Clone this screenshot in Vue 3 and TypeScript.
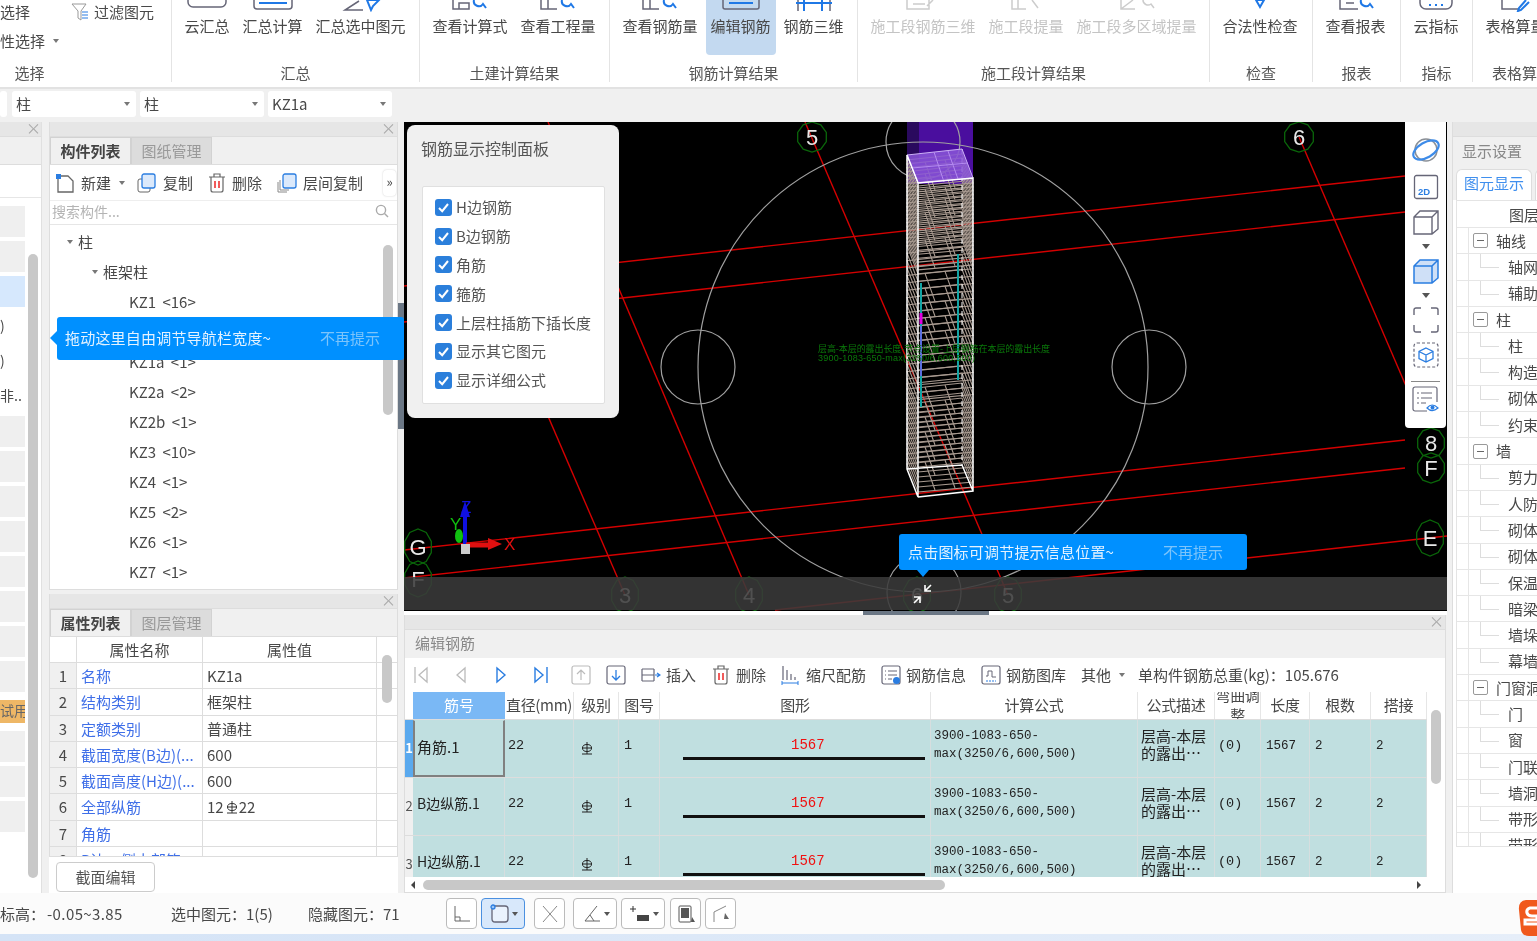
<script setup lang="ts">
interface RibbonItem { label: string; d?: string; b?: string; active?: boolean; off?: boolean }

const ribbon: { label: string; w: number; items: RibbonItem[] }[] = [
  { label: '汇总', w: 248, items: [
    { label: '云汇总', d: 'M1 0v2a5 5 0 0 0 5 5h28a5 5 0 0 0 5-5V0' },
    { label: '汇总计算', d: 'M1 0v6a3 3 0 0 0 3 3h32a3 3 0 0 0 3-3V0', b: 'M6 3h28' },
    { label: '汇总选中图元', d: 'M18 1 4 10h18', b: 'M26 0h12l-6 6-2 4z' },
  ] },
  { label: '土建计算结果', w: 190, items: [
    { label: '查看计算式', d: 'M3 0v9h16V3H9v6', b: 'M24 0a5 5 0 0 0 9 4l3 4' },
    { label: '查看工程量', d: 'M3 0v9h16M10 0v9', b: 'M24 0a5 5 0 0 0 9 4l3 4' },
  ] },
  { label: '钢筋计算结果', w: 248, items: [
    { label: '查看钢筋量', d: 'M3 0v9h16M10 0v9', b: 'M24 0a5 5 0 0 0 9 4l3 4' },
    { label: '编辑钢筋', active: true, d: 'M2 0v7a2 2 0 0 0 2 2h32a2 2 0 0 0 2-2V0', b: 'M8 3h24' },
    { label: '钢筋三维', d: 'M4 0v11M36 0v11', b: 'M2 3h36M10 0v11M28 0v11' },
  ] },
  { label: '施工段计算结果', w: 352, items: [
    { label: '施工段钢筋三维', off: true, d: 'M4 0v9h22V0M30 0l-6 6M10 4h12' },
    { label: '施工段提量', off: true, d: 'M6 0v9h14M12 0v9M26 0l6 8' },
    { label: '施工段多区域提量', off: true, d: 'M4 0v9h14M4 9 16 0M26 0a5 5 0 0 0 8 4l3 4' },
  ] },
  { label: '检查', w: 103, items: [{ label: '合法性检查', b: 'M16 0h8l-4 7z' }] },
  { label: '报表', w: 88, items: [{ label: '查看报表', d: 'M4 0v9h18M10 3h8', b: 'M25 0a5 5 0 0 0 9 4l3 4' }] },
  { label: '指标', w: 72, items: [{ label: '云指标', d: 'M4 0v3a6 6 0 0 0 6 6h20a6 6 0 0 0 6-6V0', b: 'M13 5h2M19 5h2M25 5h2' }] },
  { label: '表格算量', w: 98, items: [{ label: '表格算量', d: 'M6 0v9h16', b: 'M30 0l-7 8-1 3 3-1 8-8' }] },
]

const navCells = [
  '', '', 'blue', ')', ')', '非..', '', '', '', '', '', '', '', '', '试用', '', '', '',
]

// the second row sits fully behind the tooltip
const treeRows = ['KZ1 <16>', '', 'KZ1a <1>', 'KZ2a <2>', 'KZ2b <1>', 'KZ3 <10>', 'KZ4 <1>', 'KZ5 <2>', 'KZ6 <1>', 'KZ7 <1>']

const props_ = [
  { n: '名称', v: 'KZ1a' },
  { n: '结构类别', v: '框架柱' },
  { n: '定额类别', v: '普通柱' },
  { n: '截面宽度(B边)(...', v: '600' },
  { n: '截面高度(H边)(...', v: '600' },
  { n: '全部纵筋', v: '22', bar: true },
  { n: '角筋', v: '' },
  { n: 'B边一侧中部筋', v: '' },
]

const checks = ['H边钢筋', 'B边钢筋', '角筋', '箍筋', '上层柱插筋下插长度', '显示其它图元', '显示详细公式']

const layers = [
  { t: '轴线', p: true }, { t: '轴网' }, { t: '辅助' },
  { t: '柱', p: true }, { t: '柱' }, { t: '构造' }, { t: '砌体' }, { t: '约束' },
  { t: '墙', p: true }, { t: '剪力' }, { t: '人防' }, { t: '砌体' }, { t: '砌体' }, { t: '保温' }, { t: '暗梁' }, { t: '墙垛' }, { t: '幕墙' },
  { t: '门窗洞', p: true }, { t: '门' }, { t: '窗' }, { t: '门联' }, { t: '墙洞' }, { t: '带形' }, { t: '带形' },
]

const rebars = [
  { no: 1, name: '角筋.1' },
  { no: 2, name: 'B边纵筋.1' },
  { no: 3, name: 'H边纵筋.1' },
]

const heads = ['直径(mm)', '级别', '图号', '图形', '计算公式', '公式描述', '弯曲调整', '长度', '根数', '搭接']

// stirrup spacing is tighter near the top of the column, as in the model view
const stirrups: string[] = []
let sy = 188
while (sy < 492) {
  const y = sy
  stirrups.push(`M918 ${y}L973 ${y - 5}L962 ${y - 34}L907 ${y - 28}Z`)
  if (Math.round(y) % 3 === 0) stirrups.push(`M935 ${y - 2}L925 ${y - 30}M955 ${y - 4}L945 ${y - 32}`)
  sy += y < 270 ? 3.9 : y < 400 ? 7.4 : 5
}

const bubbles = [
  { x: 812, y: 137, rx: 15, ry: 15, t: '5' },
  { x: 1299, y: 137, rx: 15, ry: 15, t: '6' },
  { x: 418, y: 547, rx: 14, ry: 18, t: 'G' },
  { x: 418, y: 579, rx: 14, ry: 18, t: 'F' },
  { x: 1430, y: 538, rx: 14, ry: 18, t: 'E' },
  { x: 1431, y: 443, rx: 14, ry: 15, t: '8' },
  { x: 1431, y: 468, rx: 14, ry: 15, t: 'F' },
  { x: 625, y: 595, rx: 14, ry: 18, t: '3' },
  { x: 749, y: 595, rx: 14, ry: 18, t: '4' },
  { x: 917, y: 595, rx: 14, ry: 18, t: '6' },
  { x: 1008, y: 595, rx: 14, ry: 18, t: '5' },
]

function bubblePoints(b: { x: number; y: number; rx: number; ry: number }) {
  const pts: string[] = []
  for (let i = 0; i < 10; i++) {
    const a = (i / 10) * Math.PI * 2 + Math.PI / 10
    pts.push(`${(b.x + Math.cos(a) * b.rx).toFixed(1)},${(b.y + Math.sin(a) * b.ry).toFixed(1)}`)
  }
  return pts.join(' ')
}

const redLines = [
  [404, 286, 1405, 176], [404, 322, 1405, 212], [404, 550, 1405, 440], [404, 578, 1405, 468], [775, 610, 1447, 536],
  [805, 122, 1008, 595], [548, 122, 749, 595], [470, 235, 625, 595], [1299, 137, 1412, 400],
]
</script>

<template>
  <div class="app">
    <header class="ribbon">
      <section class="group first">
        <div class="sel-rows">
          <div class="sel-row">
            <span class="sel-a">选择</span>
            <svg width="18" height="20" viewBox="0 0 18 20" class="funnel">
              <path d="M1 2h14L10 9v9l-3-2V9z" fill="none" stroke="#999" />
              <path d="M11 10h6M11 13h6M11 16h6" stroke="#2a7de1" />
            </svg>
            <span>过滤图元</span>
          </div>
          <div class="sel-row"><span>性选择</span><i class="caret small-gap"></i></div>
        </div>
        <div class="group-label">选择</div>
      </section>
      <section v-for="g in ribbon" :key="g.label" class="group" :style="{ width: g.w + 'px' }">
        <div class="items">
          <div
            v-for="it in g.items"
            :key="it.label"
            class="rb-item"
            :class="{ active: it.active, off: it.off }"
          >
            <svg width="40" height="12" viewBox="0 0 40 12" fill="none">
              <path v-if="it.d" :d="it.d" :stroke="it.off ? '#ccc' : '#667'" stroke-width="1.5" />
              <path v-if="it.b" :d="it.b" stroke="#1f78e6" stroke-width="2" />
            </svg>
            <span>{{ it.label }}</span>
          </div>
        </div>
        <div class="group-label">{{ g.label }}</div>
      </section>
    </header>

    <div class="combos">
      <div class="combo stub"><i class="caret"></i></div>
      <div class="combo"><span>柱</span><i class="caret"></i></div>
      <div class="combo"><span>柱</span><i class="caret"></i></div>
      <div class="combo"><span>KZ1a</span><i class="caret"></i></div>
    </div>

    <main class="main">
      <aside class="nav">
        <div class="bar"><span class="close">×</span></div>
        <div class="nav-body">
          <div class="nav-tab"></div>
          <div class="nav-tool"></div>
          <div class="nav-cells">
            <div
              v-for="(c, i) in navCells"
              :key="i"
              class="nav-cell"
              :class="{ blue: c === 'blue', trial: c === '试用', text: c && c !== 'blue' }"
            >{{ c === 'blue' ? '' : c }}</div>
          </div>
          <div class="nav-scroll"></div>
        </div>
      </aside>

      <div class="col2">
        <section class="list-panel">
          <div class="bar"><span class="close">×</span></div>
          <div class="tabs">
            <span class="tab on">构件列表</span>
            <span class="tab">图纸管理</span>
          </div>
          <div class="list-tools">
            <span class="tool first-tool">
              <svg width="20" height="20" viewBox="0 0 20 20" fill="none">
                <path d="M3 3h10l5 5v11H3z" stroke="#666" stroke-width="1.3" />
                <rect x="1" y="1" width="5" height="5" fill="#2a7de1" />
              </svg>
              新建<i class="caret tool-caret"></i>
            </span>
            <span class="tool">
              <svg width="20" height="20" viewBox="0 0 20 20" fill="none">
                <rect x="1" y="6" width="12" height="13" rx="2" stroke="#666" />
                <rect x="5" y="1" width="13" height="14" rx="2" fill="#dbe9fb" stroke="#2a7de1" stroke-width="1.3" />
              </svg>
              复制
            </span>
            <span class="tool">
              <svg width="18" height="20" viewBox="0 0 18 20" fill="none">
                <path d="M1 4h16M6 4V1h6v3M3 4v13a2 2 0 0 0 2 2h8a2 2 0 0 0 2-2V4" stroke="#666" stroke-width="1.2" />
                <path d="M7 8v7M11 8v7" stroke="#e33" stroke-width="1.6" />
              </svg>
              删除
            </span>
            <span class="tool">
              <svg width="20" height="20" viewBox="0 0 20 20" fill="none">
                <path d="M1 9v10h9M3 7v10h9" stroke="#888" />
                <rect x="6" y="1" width="13" height="14" rx="2" fill="#dbe9fb" stroke="#2a7de1" stroke-width="1.3" />
              </svg>
              层间复制
            </span>
            <span class="more">»</span>
          </div>
          <div class="search">
            <span>搜索构件...</span>
            <svg width="14" height="14" viewBox="0 0 14 14" fill="none">
              <circle cx="6" cy="6" r="4.6" stroke="#aaa" stroke-width="1.4" /><path d="m9.5 9.5 3.5 3.5" stroke="#aaa" stroke-width="1.4" />
            </svg>
          </div>
          <div class="tree">
            <div class="t-row lv0"><i class="caret tree-caret"></i>柱</div>
            <div class="t-row lv1"><i class="caret tree-caret"></i>框架柱</div>
            <div v-for="(r, i) in treeRows" :key="i" class="t-row lv2">{{ r }}</div>
            <div class="tree-scroll"></div>
          </div>
          <div class="tip nav-tip">
            <span class="tip-msg">拖动这里自由调节导航栏宽度~</span><span class="tip-off">不再提示</span>
          </div>
        </section>

        <section class="prop-panel">
          <div class="bar"><span class="close">×</span></div>
          <div class="tabs">
            <span class="tab on">属性列表</span>
            <span class="tab">图层管理</span>
          </div>
          <div class="prop-table">
            <div class="p-row p-head">
              <div class="p-i"></div>
              <div class="p-n center">属性名称</div>
              <div class="p-v center">属性值</div>
            </div>
            <div v-for="(p, i) in props_" :key="p.n" class="p-row">
              <div class="p-i">{{ i + 1 }}</div>
              <div class="p-n link">{{ p.n }}</div>
              <div class="p-v">
                <template v-if="p.bar">12<svg class="grade" width="12" height="13" viewBox="0 0 12 13" fill="none" stroke="#333"><ellipse cx="6" cy="6" rx="4.5" ry="3.5" /><path d="M6 0v12M1 12h10M1 6h10" /></svg></template>{{ p.v }}
              </div>
            </div>
            <div class="prop-scroll"></div>
          </div>
        </section>
        <div class="sec-row"><button class="sec-btn" type="button">截面编辑</button></div>
      </div>

      <div class="v-handle"><i></i></div>

      <div class="col3">
        <section class="viewport">
          <svg class="scene" width="1043" height="489" viewBox="404 122 1043 489" fill="none">
            <rect x="907" y="122" width="66" height="62" fill="#4a0e9e" />
            <rect x="907" y="122" width="12" height="40" fill="#2a0a5e" />
            <line v-for="(l, i) in redLines" :key="i" :x1="l[0]" :y1="l[1]" :x2="l[2]" :y2="l[3]" stroke="#d40000" stroke-width="1.4" />
            <g stroke="#a0a0a0" stroke-width="1.2">
              <circle cx="923" cy="367" r="225" />
              <circle cx="698" cy="367" r="37" />
              <circle cx="1149" cy="367" r="37" />
              <circle cx="923" cy="142" r="37" />
              <circle cx="924" cy="592" r="37" />
            </g>
            <path v-for="(s, i) in stirrups" :key="i" :d="s" stroke="#a89a90" stroke-width="1.1" />
            <path d="M921 283v124M958 254v126" stroke="#12a5a5" stroke-width="2" />
            <path d="M921 313v11" stroke="#e000e0" stroke-width="3" />
            <path d="M921 326v50" stroke="#5a6ee0" stroke-width="2" />
            <path d="M962 149v316" stroke="#fff" stroke-dasharray="5 4" />
            <path d="M907 155 962 149 973 178 918 183z" fill="#8a55d8" fill-opacity=".85" stroke="#cbb0f5" />
            <path d="M912 168 968 163M934 152l10 30M948 151l10 28" stroke="#b48af0" />
            <path d="M907 155v314l11 28V183zM918 183l55-5v313l-55 6M907 469l55-4 11 26" stroke="#fff" stroke-width="1.5" />
            <text x="818" y="352" fill="#0a7a0a" font-size="9" textLength="232" class="scene-cn">层高-本层的露出长度-节点设置-上层钢筋在本层的露出长度</text>
            <text x="818" y="361" fill="#0a7a0a" font-size="9" textLength="157" class="scene-en">3900-1083-650-max(3250/6,600,500)</text>
            <g v-for="b in bubbles" :key="b.x + b.t">
              <polygon :points="bubblePoints(b)" stroke="#0a660a" stroke-width="1.3" />
              <text :x="b.x" :y="b.y + 8" text-anchor="middle" fill="#e8e8e8" font-size="22" class="scene-en">{{ b.t }}</text>
            </g>
            <path d="M465 545v-32" stroke="#1010e0" stroke-width="4" />
            <path d="M465 501l-5 16h10z" fill="#1010e0" />
            <text x="461" y="513" fill="#1010e0" font-size="17" class="scene-en">Z</text>
            <text x="450" y="530" fill="#10c010" font-size="17" class="scene-en">Y</text>
            <ellipse cx="459" cy="536" rx="4" ry="7" fill="#10c010" />
            <path d="M466 545h24" stroke="#e01010" stroke-width="5" />
            <path d="M502 544l-14-6v12z" fill="#e01010" />
            <text x="504" y="550" fill="#e01010" font-size="17" class="scene-en">X</text>
            <rect x="461" y="544" width="9" height="10" fill="#ccc" />
            <rect x="404" y="577" width="1043" height="33" fill="#3a3a3a" fill-opacity=".88" />
            <path d="M925 591l6-6M925 585v6h6M920 597l-6 6M920 603v-6h-6" stroke="#fff" stroke-width="1.6" />
          </svg>

          <div class="rebar-panel">
            <div class="rp-title">钢筋显示控制面板</div>
            <div class="rp-box">
              <label v-for="c in checks" :key="c" class="rp-row">
                <span class="check">
                  <svg width="13" height="13" viewBox="0 0 13 13" fill="none"><path d="m2 7 3.2 3.2L11 3" stroke="#fff" stroke-width="2" /></svg>
                </span>
                {{ c }}
              </label>
            </div>
          </div>

          <div class="palette">
            <svg width="30" height="30" viewBox="0 0 30 30" fill="none">
              <circle cx="15" cy="15" r="11" stroke="#8a8f96" stroke-width="1.5" />
              <ellipse cx="15" cy="15" rx="14" ry="7.5" transform="rotate(-30 15 15)" stroke="#3d8be8" stroke-width="2.2" />
            </svg>
            <svg width="26" height="26" viewBox="0 0 26 26" fill="none">
              <rect x="1.500" y="1.500" width="23" height="23" rx="2" stroke="#667" stroke-width="1.3" />
              <text x="5" y="21" fill="#2a7de1" font-size="9.500" font-weight="700" class="scene-en">2D</text>
            </svg>
            <div class="cube-pair">
              <svg width="26" height="26" viewBox="0 0 26 26" fill="none">
                <path d="M1 8 7 2h18v18l-6 5H1zM1 8h18v17M19 8l6-6" stroke="#667" stroke-width="1.4" />
              </svg>
              <i class="caret dark"></i>
            </div>
            <div class="cube-pair">
              <svg width="26" height="26" viewBox="0 0 26 26" fill="#cfe0f7">
                <path d="M1 8 7 2h18v18l-6 5H1zM1 8h18v17M19 8l6-6" stroke="#2a7de1" stroke-width="1.5" />
              </svg>
              <i class="caret dark"></i>
            </div>
            <svg width="26" height="26" viewBox="0 0 26 26" fill="none">
              <path d="M1 8V3a2 2 0 0 1 2-2h5M18 1h5a2 2 0 0 1 2 2v5M25 18v5a2 2 0 0 1-2 2h-5M8 25H3a2 2 0 0 1-2-2v-5" stroke="#667" stroke-width="1.4" />
            </svg>
            <svg width="26" height="26" viewBox="0 0 26 26" fill="none">
              <rect x="1" y="1" width="24" height="24" rx="3" stroke="#667" stroke-width="1.2" stroke-dasharray="3 2" />
              <path d="m13 6 7 3.500v7L13 20l-7-3.500v-7zM6 9.500l7 3.500 7-3.500M13 13v7" stroke="#2a7de1" stroke-width="1.3" />
            </svg>
            <div class="pal-sep"></div>
            <svg width="28" height="28" viewBox="0 0 28 28" fill="none">
              <path d="M15 25H3a2 2 0 0 1-2-2V3a2 2 0 0 1 2-2h20a2 2 0 0 1 2 2v13" stroke="#667" stroke-width="1.2" />
              <path d="M5 7h2M9 7h11M5 12h2M9 12h11M5 17h2M9 17h5" stroke="#667" stroke-width="1.2" />
              <path d="M15 22q5-6 11 0-6 5-11 0z" stroke="#2a7de1" stroke-width="1.2" /><circle cx="20.500" cy="21.500" r="2" fill="#2a7de1" />
            </svg>
          </div>
          <div class="pal-handle"></div>

          <div class="tip view-tip">
            <span class="tip-msg">点击图标可调节提示信息位置~</span><span class="tip-off">不再提示</span>
          </div>
        </section>

        <div class="h-strip"><div class="h-handle"></div></div>

        <section class="edit-panel">
          <div class="bar"><span class="close">×</span></div>
          <div class="edit-title">编辑钢筋</div>
          <div class="edit-tools">
            <svg class="ic" width="14" height="18" viewBox="0 0 14 18" fill="none" stroke="#bbb" stroke-width="1.3"><path d="M1 1v16M13 2 5 9l8 7z" /></svg>
            <svg class="ic" width="14" height="18" viewBox="0 0 14 18" fill="none" stroke="#bbb" stroke-width="1.3"><path d="M11 2 3 9l8 7z" /></svg>
            <svg class="ic" width="14" height="18" viewBox="0 0 14 18" fill="none" stroke="#2a7de1" stroke-width="1.4"><path d="M3 2l8 7-8 7z" /></svg>
            <svg class="ic" width="14" height="18" viewBox="0 0 14 18" fill="none" stroke="#2a7de1" stroke-width="1.4"><path d="M1 2l8 7-8 7zM13 1v16" /></svg>
            <svg class="ic box" width="20" height="20" viewBox="0 0 20 20" fill="none" stroke="#bbb" stroke-width="1.2"><rect x="1" y="1" width="18" height="18" rx="2" /><path d="M10 15V5M6 9l4-4 4 4" /></svg>
            <svg class="ic box2" width="20" height="20" viewBox="0 0 20 20" fill="none"><rect x="1" y="1" width="18" height="18" rx="2" stroke="#667" stroke-width="1.2" /><path d="M10 5v10M6 11l4 4 4-4" stroke="#2a7de1" stroke-width="1.3" /></svg>
            <span class="et ins">
              <svg width="20" height="18" viewBox="0 0 20 18" fill="none"><path d="M1 3h12M1 9h12M1 15h12M1 3v12M13 3v12" stroke="#667" stroke-width="1.2" /><path d="M14 9h4M16 7l3 2-3 2" stroke="#2a7de1" stroke-width="1.2" /></svg>
              插入
            </span>
            <span class="et del">
              <svg width="18" height="20" viewBox="0 0 18 20" fill="none"><path d="M1 4h16M6 4V1h6v3M3 4v13a2 2 0 0 0 2 2h8a2 2 0 0 0 2-2V4" stroke="#666" stroke-width="1.2" /><path d="M7 8v7M11 8v7" stroke="#e33" stroke-width="1.6" /></svg>
              删除
            </span>
            <span class="et scale">
              <svg width="18" height="20" viewBox="0 0 18 20" fill="none"><path d="M2 1v14M6 5v10M10 9v6M14 12v3" stroke="#667" stroke-width="1.2" /><path d="M1 18h16M1 16v4M17 16v4" stroke="#2a7de1" /></svg>
              缩尺配筋
            </span>
            <span class="et info">
              <svg width="20" height="20" viewBox="0 0 20 20" fill="none"><rect x="1" y="1" width="18" height="18" rx="2" stroke="#667" stroke-width="1.2" /><path d="M4 6h1M7 6h9M4 10h1M7 10h9M4 14h1M7 14h4" stroke="#667" /><circle cx="15.500" cy="15.500" r="3.500" fill="#2a7de1" /></svg>
              钢筋信息
            </span>
            <span class="et lib">
              <svg width="20" height="20" viewBox="0 0 20 20" fill="none"><rect x="1" y="1" width="18" height="18" rx="2" stroke="#667" stroke-width="1.2" /><path d="M5 11h2V6h4v6h4" stroke="#667" /><path d="M5 16h10" stroke="#2a7de1" stroke-dasharray="2 1" /></svg>
              钢筋图库
            </span>
            <span class="et other">其他<i class="caret tool-caret"></i></span>
            <span class="et total">单构件钢筋总重(kg)：105.676</span>
          </div>

          <div class="grid-wrap">
            <div class="g-row g-head">
              <div class="c rh"></div>
              <div class="c no-head">筋号</div>
              <div v-for="h in heads" :key="h" class="c head-cell"><span>{{ h }}</span></div>
            </div>
            <div v-for="r in rebars" :key="r.no" class="g-row g-body" :class="{ sel: r.no === 1 }">
              <div class="c rh">{{ r.no }}</div>
              <div class="c name">{{ r.name }}</div>
              <div class="c mono">22</div>
              <div class="c mono lvl">
                <svg width="12" height="13" viewBox="0 0 12 13" fill="none" stroke="#222"><ellipse cx="6" cy="6" rx="4.500" ry="3.500" /><path d="M6 0v12M1 12h10M1 6h10" /></svg>
              </div>
              <div class="c mono fig">1</div>
              <div class="c shape"><span>1567</span><i></i></div>
              <div class="c formula">3900-1083-650-<br />max(3250/6,600,500)</div>
              <div class="c desc">层高-本层<br />的露出…</div>
              <div class="c mono">(0)</div>
              <div class="c mono sm">1567</div>
              <div class="c mono sm">2</div>
              <div class="c mono sm">2</div>
            </div>
            <div class="grid-vscroll"></div>
          </div>
          <div class="hscroll">
            <i class="arr l"></i>
            <div class="thumb"></div>
            <i class="arr r"></i>
          </div>
        </section>
      </div>

      <div class="gap-right"></div>

      <aside class="right">
        <div class="bar"></div>
        <div class="r-title">显示设置</div>
        <div class="r-tabs"><span class="r-tab">图元显示</span><span class="r-tab stub-tab"></span></div>
        <div class="layer-tree">
          <div class="l-head">图层</div>
          <div v-for="(l, i) in layers" :key="i" class="l-row" :class="{ parent: l.p }">
            <span v-if="l.p" class="exp"></span>
            <span v-else class="dash"></span>
            <span class="l-text">{{ l.t }}</span>
          </div>
        </div>
      </aside>
    </main>

    <footer class="status">
      <span class="s-a">标高：</span>
      <span class="s-b">-0.05~3.85</span>
      <span class="s-c">选中图元：1(5)</span>
      <span class="s-d">隐藏图元：71</span>
      <div class="s-tools">
        <span class="st"><svg width="22" height="22" viewBox="0 0 22 22" fill="none" stroke="#666"><path d="M4 3v15h15M4 14h5v4" /></svg></span>
        <span class="st wide on"><svg width="22" height="22" viewBox="0 0 22 22" fill="none" stroke="#667" stroke-width="1.3"><rect x="3" y="3" width="16" height="16" rx="3" fill="#eaf2fd" /><circle cx="4" cy="4" r="2" fill="#9cc4f5" stroke="#2a7de1" /></svg><i class="caret dark tiny"></i></span>
        <span class="st after-on"><svg width="22" height="22" viewBox="0 0 22 22" fill="none" stroke="#888"><path d="M4 3l14 16M18 3 4 19" /></svg></span>
        <span class="st wide after-x"><svg width="22" height="22" viewBox="0 0 22 22" fill="none" stroke="#666"><path d="M16 3 4 18h15M9 12l4 6" /></svg><i class="caret dark tiny"></i></span>
        <span class="st wide"><svg width="24" height="22" viewBox="0 0 24 22" fill="none"><path d="M2 6h6M5 3v6" stroke="#333" /><rect x="9" y="12" width="12" height="6" fill="#444" /></svg><i class="caret dark tiny"></i></span>
        <span class="st after-wide"><svg width="22" height="22" viewBox="0 0 22 22" fill="none"><rect x="4" y="3" width="12" height="16" rx="1" stroke="#555" /><rect x="6" y="5" width="8" height="10" fill="#555" /><path d="M17 14l3 5h-4z" fill="#555" /></svg></span>
        <span class="st"><svg width="22" height="22" viewBox="0 0 22 22" fill="none"><path d="M4 19V9l12-6" stroke="#888" /><path d="M15 10l4 6h-5z" fill="#666" /></svg></span>
      </div>
      <svg class="logo" width="19" height="36" viewBox="0 0 19 36">
        <path d="M19 0H8Q0 1 1 10l2 20q1 6 8 6h8z" fill="#f0591d" />
        <path d="M19 8h-7q-4 1-3 5 1 3 5 3h5v4H7v4h12" fill="none" stroke="#fff" stroke-width="3" />
      </svg>
    </footer>
    <div class="task-strip"></div>
  </div>
</template>

<style scoped>
.app {
  position: relative;
  display: flex;
  flex-direction: column;
  width: 1537px;
  height: 941px;
  overflow: hidden;
  background: #f0f0f0;
  color: #484848;
  font-family: "Noto Sans CJK SC", "Noto Sans", sans-serif;
  font-size: 15px;
  line-height: 18px;
  filter: blur(0.4px);
}

i { display: block; font-style: normal; }

.caret {
  width: 0;
  height: 0;
  border-left: 3.5px solid transparent;
  border-right: 3.5px solid transparent;
  border-top: 4px solid #777;
}
.caret.dark { border-top-color: #555; }
.caret.tiny { border-left-width: 3px; border-right-width: 3px; border-top-width: 4px; }

/* ribbon */
.ribbon {
  display: flex;
  height: 89px;
  flex: none;
  background: #fff;
  border-bottom: 2px solid #e2e2e2;
  box-sizing: border-box;
  overflow: hidden;
}
.group {
  display: flex;
  flex: none;
  flex-direction: column;
  height: 82px;
  box-sizing: border-box;
  border-right: 1px solid #e4e4e4;
}
.group:last-child { border-right: 0; }
.group.first { width: 172px; }
.sel-rows { height: 64px; margin-top: -3px; box-sizing: border-box; padding-bottom: 0; }
.sel-row { display: flex; align-items: center; height: 29px; }
.sel-a { width: 71px; }
.funnel { margin-right: 5px; }
.small-gap { margin-left: 8px; }
.group-label { text-align: center; height: 18px; color: #555; }
.items { display: flex; gap: 13px; height: 55px; margin-bottom: 9px; padding-left: 12.5px; white-space: nowrap; }
.first .group-label { padding-right: 112px; margin-top: 3px; }
.rb-item { display: flex; flex-direction: column; align-items: center; }
.rb-item svg { display: block; margin-bottom: 5px; }
.rb-item.off { color: #c4c4c4; }
.rb-item.active {
  margin: 0 -5px;
  padding: 0 5px;
  background: #c3d9f0;
  border-radius: 0 0 4px 4px;
}

/* selector row */
.combos {
  display: flex;
  flex: none;
  align-items: center;
  gap: 4px;
  height: 33px;
  padding-bottom: 3px;
  box-sizing: border-box;
}
.combo {
  display: flex;
  align-items: center;
  justify-content: space-between;
  width: 124px;
  height: 26px;
  padding: 0 6px 0 4px;
  box-sizing: border-box;
  background: #fff;
  border-radius: 3px;
}
.combo.stub { width: 7px; margin-right: 1px; padding: 0; overflow: hidden; }
.combo.stub .caret { display: none; }

/* shared panel bits */
.main { display: flex; flex: none; height: 771px; }
.bar {
  position: relative;
  height: 14px;
  flex: none;
  background: #e6e6e6;
  border-bottom: 1px solid #ddd;
}
.close {
  position: absolute;
  top: -2px;
  right: 1px;
  color: #aaa;
  font-size: 15px;
  line-height: 15px;
}
.nav .close { right: 0; }
.tabs {
  display: flex;
  height: 28px;
  box-sizing: border-box;
  background: #f0f0f0;
  border-bottom: 1px solid #ddd;
}
.tab {
  width: 81px;
  line-height: 25px;
  text-align: center;
  color: #999;
  background: #dcdcdc;
  border: 1px solid #d2d2d2;
  border-bottom: 0;
  box-sizing: border-box;
}
.tab.on { font-weight: 700; color: #444; background: #f0f0f0; }

/* left nav */
.nav { width: 42px; flex: none; background: #fff; display: flex; flex-direction: column; border-right: 1px solid #e0e0e0; box-sizing: border-box; }
.nav-body { position: relative; flex: 1; }
.nav-tab { height: 28px; box-sizing: border-box; background: #f0f0f0; border-bottom: 1px solid #ddd; }
.nav-tool { height: 33px; box-sizing: border-box; border-bottom: 1px solid #e6e6e6; margin-bottom: 8px; }
.nav-cells { width: 25px; display: flex; flex-direction: column; gap: 4px; overflow: hidden; height: 661px; }
.nav-cell { flex: none; height: 31px; background: #efefef; line-height: 29px; white-space: nowrap; text-align: right; font-size: 14px; }
.nav-cell.text { background: #fff; text-align: left; }
.nav-cell.blue { background: #d6e8fd; }
.nav-cell.trial { height: 23px; margin: 4px 0; line-height: 21px; background: #eeb766; color: #666; text-align: right; }
.nav-scroll {
  position: absolute;
  left: 28px;
  top: 117px;
  width: 10px;
  height: 624px;
  border-radius: 5px;
  background: #c8c8c8;
}

.col2 { width: 349px; flex: none; margin-left: 7px; display: flex; flex-direction: column; }

/* component list */
.list-panel {
  position: relative;
  height: 468px;
  display: flex;
  flex-direction: column;
  background: #fff;
  border: 1px solid #ddd;
  border-top: 0;
  box-sizing: border-box;
}
.list-tools {
  display: flex;
  align-items: center;
  gap: 15px;
  height: 35px;
  padding-left: 5px;
  border-bottom: 1px solid #eee;
}
.tool { display: flex; align-items: center; gap: 6px; white-space: nowrap; }
.tool-caret { margin-left: 1px; border-left-width: 3px; border-right-width: 3px; }
.first-tool { margin-right: -3px; }
.first-tool .tool-caret { margin-left: 2px; }
.more {
  margin-left: 5px;
  width: 13px;
  height: 26px;
  line-height: 24px;
  text-align: center;
  border-radius: 4px;
  box-shadow: 0 0 2px #ccc;
  font-size: 13px;
}
.search {
  display: flex;
  align-items: center;
  justify-content: space-between;
  height: 24px;
  flex: none;
  padding: 0 8px 3px 2px;
  box-sizing: border-box;
  color: #b4b4b4;
  font-size: 14px;
  border-bottom: 1px solid #e6e6e6;
}
.tree { position: relative; flex: 1; padding-top: 2px; overflow: hidden; }
.t-row { display: flex; align-items: center; height: 30px; white-space: pre; flex: none; }
.lv0 { padding-left: 17px; }
.lv1 { padding-left: 42px; }
.lv2 { padding-left: 79px; word-spacing: 3px; }
.tree-caret { margin-right: 5px; }
.tree-scroll {
  position: absolute;
  right: 4px;
  top: 20px;
  width: 10px;
  height: 170px;
  border-radius: 5px;
  background: #c8c8c8;
}
.tip {
  position: absolute;
  display: flex;
  align-items: center;
  justify-content: space-between;
  color: #e4f2ff;
  background: #0090ff;
  border-radius: 3px;
  box-sizing: border-box;
  white-space: nowrap;
  z-index: 3;
}
.tip-msg { letter-spacing: 0.2px; }
.tip-off { color: #7cc4fb; }
.tip::after {
  content: '';
  position: absolute;
  width: 0;
  height: 0;
}
.nav-tip { left: 7px; top: 195px; width: 347px; height: 43px; padding: 0 24px 2px 8px; }
.nav-tip::after {
  left: -7px;
  top: 14px;
  border-top: 7px solid transparent;
  border-bottom: 7px solid transparent;
  border-right: 7px solid #0090ff;
}

/* properties */
.prop-panel {
  margin-top: 4px;
  height: 263px;
  display: flex;
  flex-direction: column;
  background: #f4f4f4;
  border: 1px solid #ddd;
  border-top: 0;
  box-sizing: border-box;
  overflow: hidden;
}
.prop-table { position: relative; flex: 1; background: #fff; overflow: hidden; }
.p-row {
  display: grid;
  grid-template-columns: 27px 126px 174px;
  height: 26.3px;
  line-height: 25px;
  box-sizing: border-box;
  border-bottom: 1px solid #ddd;
}
.p-head { height: 26px; }
.p-i { background: #f0f0f0; text-align: center; border-right: 1px solid #ddd; }
.p-head .p-i { background: #fff; }
.p-n { padding-left: 4px; border-right: 1px solid #ddd; white-space: nowrap; overflow: hidden; }
.p-v { padding-left: 4px; border-right: 1px solid #ddd; }
.center { text-align: center; padding-left: 0; }
.link { color: #3f6fe8; }
.grade { margin: 0 1px -1px 2px; }
.prop-scroll {
  position: absolute;
  right: 5px;
  top: 18px;
  width: 10px;
  height: 48px;
  border-radius: 5px;
  background: #c8c8c8;
}
.sec-row { padding: 5px 0 0 7px; background: #fff; flex: 1; }
.sec-btn {
  width: 99px;
  height: 30px;
  padding: 0;
  font: inherit;
  color: #555;
  background: #fff;
  border: 1px solid #ccc;
  border-radius: 4px;
}

/* viewport */
.v-handle { width: 6px; flex: none; position: relative; }
.v-handle i {
  position: absolute;
  left: 0;
  top: 181px;
  width: 6px;
  height: 126px;
  background: #6b7785;
}
.col3 { width: 1043px; flex: none; display: flex; flex-direction: column; }
.viewport { position: relative; height: 489px; background: #000; overflow: hidden; flex: none; }
.scene { display: block; }
.scene-cn { font-family: "Noto Sans CJK SC", sans-serif; }
.scene-en { font-family: "Liberation Sans", sans-serif; }
.rebar-panel {
  position: absolute;
  left: 3px;
  top: 3px;
  width: 212px;
  height: 293px;
  padding: 12px 14px;
  box-sizing: border-box;
  background: #f0f0f0;
  border-radius: 8px;
}
.rp-title { font-size: 16px; height: 22px; line-height: 22px; color: #555; }
.rp-box {
  margin-top: 27px;
  margin-left: 1px;
  height: 218px;
  padding-top: 6px;
  box-sizing: border-box;
  background: #fff;
  border: 1px solid #e0e0e0;
  border-radius: 2px;
}
.rp-row {
  display: flex;
  align-items: center;
  gap: 4px;
  height: 28.8px;
  padding-left: 12px;
  white-space: nowrap;
  color: #555;
}
.check {
  display: flex;
  align-items: center;
  justify-content: center;
  width: 17px;
  height: 17px;
  background: #2b7fdb;
  border-radius: 3px;
}
.palette {
  position: absolute;
  right: 1px;
  top: 0;
  width: 41px;
  height: 306px;
  display: flex;
  flex-direction: column;
  align-items: center;
  padding-top: 13px;
  gap: 9px;
  box-sizing: border-box;
  background: #fff;
  border-radius: 0 0 4px 4px;
}
.palette svg { display: block; flex: none; }
.cube-pair { display: flex; flex-direction: column; align-items: center; gap: 9px; }
.cube-pair .caret { border-left-width: 4px; border-right-width: 4px; border-top-width: 5px; }
.pal-sep { width: 29px; height: 1px; flex: none; background: #888; margin: 4px 0 -5px; }
.pal-handle {
  position: absolute;
  right: -1px;
  top: 182px;
  width: 1px;
  height: 124px;
  background: #6b7785;
}
.view-tip { left: 495px; top: 412px; width: 348px; height: 36px; padding: 0 24px 0 9px; }
.view-tip::after {
  left: 18px;
  bottom: -7px;
  border-left: 6px solid transparent;
  border-right: 6px solid transparent;
  border-top: 7px solid #0090ff;
}
.h-strip { height: 4px; background: #fff; position: relative; flex: none; }
.h-handle { position: absolute; left: 459px; width: 126px; height: 4px; background: #6b7785; }

/* rebar editor */
.edit-panel {
  position: relative;
  flex: 1;
  display: flex;
  flex-direction: column;
  background: #fff;
  border: 1px solid #ddd;
  border-top: 0;
  width: 1042px;
  box-sizing: border-box;
  overflow: hidden;
}
.edit-title {
  height: 28px;
  line-height: 25px;
  padding-left: 10px;
  background: #f0f0f0;
  color: #888;
  flex: none;
}
.edit-tools {
  display: flex;
  align-items: center;
  height: 34px;
  padding-left: 9px;
  flex: none;
  white-space: nowrap;
}
.ic { flex: none; margin-right: 26px; }
.ic.box { margin-left: -3px; margin-right: 15px; }
.ic.box2 { margin-right: 15px; }
.et { display: flex; align-items: center; gap: 5px; }
.ins { margin-right: 16px; }
.del { margin-right: 15px; gap: 6px; }
.scale { gap: 7px; margin-right: 15px; }
.info { margin-right: 15px; }
.lib { margin-right: 15px; }
.other { margin-right: 13px; gap: 7px; }
.grid-wrap { position: relative; height: 185px; flex: none; overflow: hidden; }
.g-row {
  display: grid;
  grid-template-columns: 8px 92px 69px 45px 41px 271px 207px 77px 46px 49px 61px 56px;
  width: 1022px;
}
.g-head { height: 27px; background: #fff; }
.head-cell {
  display: flex;
  align-items: center;
  justify-content: center;
  height: 27px;
  overflow: hidden;
  line-height: 20px;
  text-align: center;
  white-space: normal;
  border-right: 1px solid #e6e6e6;
  box-sizing: border-box;
  font-size: 15px;
}
.head-cell span { letter-spacing: -0.3px; margin-top: -2px; }
.no-head { background: #7ab8f5; color: #fff; text-align: center; line-height: 25px; }
.g-body { height: 58px; background: #c0dfe0; border-top: 1px solid #ddd; box-sizing: border-box; }
.c { min-width: 0; }
.rh { text-align: center; background: #f0f0f0; color: #555; line-height: 56px; font-size: 13px; overflow: hidden; }
.g-head .rh { background: #fff; }
.sel .rh { background: #5aa9ee; color: #fff; font-weight: 700; }
.name { padding-left: 4px; line-height: 50px; white-space: nowrap; font-size: 14px; color: #222; box-sizing: border-box; border-right: 1px solid #d6dedf; overflow: hidden; }
.g-body.sel .c.name { border: 2px solid #808080; border-top: 1px solid #c0dfe0; padding-left: 2px; font-size: 15px; line-height: 52px; }
.g-body .c + .c { border-right: 1px solid #d6dedf; }
.mono {
  display: flex;
  align-items: center;
  padding: 0 0 6px 3px;
  font-family: "Liberation Mono", monospace;
  font-size: 13.5px;
  color: #222;
}
.mono.sm { font-size: 12.500px; padding-left: 5px; }
.mono.lvl { padding: 0 0 0 7px; }
.mono.fig { padding-left: 5px; }
.shape {
  display: flex;
  flex-direction: column;
  align-items: flex-start;
  padding: 16px 0 0 23px;
  box-sizing: border-box;
  font-family: "Liberation Mono", monospace;
  font-size: 14px;
  color: #f01010;
}
.shape span { margin-left: 108px; }
.shape i { width: 242px; height: 2.5px; margin-top: 3px; background: #111; }
.formula {
  padding: 7px 0 0 3px;
  font-family: "Liberation Mono", monospace;
  font-size: 12.500px;
  line-height: 18px;
  color: #222;
  white-space: nowrap;
  overflow: hidden;
}
.desc { padding: 7px 0 0 3px; line-height: 17px; color: #222; white-space: nowrap; overflow: hidden; }
.grid-vscroll {
  position: absolute;
  left: 1026px;
  top: 18px;
  width: 10px;
  height: 74px;
  border-radius: 5px;
  background: #c8c8c8;
}
.hscroll { position: relative; flex: 1; background: #fff; }
.thumb {
  position: absolute;
  left: 18px;
  top: 3px;
  width: 522px;
  height: 10px;
  border-radius: 5px;
  background: #c8c8c8;
}
.arr { position: absolute; top: 4px; width: 0; height: 0; border-top: 4px solid transparent; border-bottom: 4px solid transparent; }
.arr.l { left: 6px; border-right: 4px solid #444; }
.arr.r { left: 1012px; border-left: 4px solid #444; }

/* right column */
.gap-right { width: 5px; flex: none; background: #f0f0f0; }
.right {
  flex: 1;
  min-width: 0;
  display: flex;
  flex-direction: column;
  background: #fff;
  border-left: 1px solid #ddd;
  overflow: hidden;
}
.r-title { height: 32px; flex: none; padding-left: 9px; line-height: 27px; background: #f0f0f0; color: #888; }
.r-tabs { display: flex; gap: 3px; height: 31px; flex: none; padding-left: 3px; background: #f0f0f0; }
.r-tab {
  width: 76px;
  flex: none;
  line-height: 26px;
  text-align: center;
  color: #3f8fee;
  background: #fff;
  border: 1px solid #ddd;
  border-bottom: 0;
  border-radius: 6px 6px 0 0;
  box-sizing: border-box;
}
.stub-tab { width: 20px; }
.layer-tree {
  margin-left: 3px;
  height: 647px;
  overflow: hidden;
  border: 1px solid #e4e4e4;
  border-right: 0;
  box-sizing: border-box;
}
.l-head { height: 27px; padding-left: 52px; line-height: 27px; border-bottom: 1px solid #e6e6e6; box-sizing: border-box; white-space: nowrap; }
.l-row {
  position: relative;
  display: flex;
  align-items: center;
  height: 26.3px;
  padding-left: 51px;
  box-sizing: border-box;
  border-bottom: 1px solid #e6e6e6;
  white-space: nowrap;
}
.l-row::before {
  content: '';
  position: absolute;
  left: 11px;
  top: 0;
  bottom: -1px;
  width: 1px;
  background: #e6e6e6;
}
.l-row.parent { padding-left: 16px; }
.exp {
  position: relative;
  flex: none;
  width: 15px;
  height: 15px;
  margin-right: 8px;
  border: 1px solid #999;
  border-radius: 2px;
  box-sizing: border-box;
}
.exp::after {
  content: '';
  position: absolute;
  left: 3px;
  top: 6px;
  width: 7px;
  height: 1px;
  background: #666;
}
.dash {
  position: absolute;
  left: 23px;
  top: 0;
  width: 18px;
  height: 13px;
  border-left: 1px solid #ddd;
  border-bottom: 1px solid #ddd;
}

/* status */
.status {
  position: relative;
  display: flex;
  align-items: center;
  flex: none;
  height: 41px;
  background: #fbfbfb;
  white-space: nowrap;
}
.s-a { width: 47px; margin-left: -12px; padding-left: 12px; box-sizing: content-box; }
.s-b { width: 124px; letter-spacing: 0.4px; }
.s-c { width: 137px; }
.s-d { width: 138px; }
.s-tools { display: flex; gap: 4px; }
.st {
  display: flex;
  align-items: center;
  justify-content: center;
  gap: 1px;
  width: 31px;
  height: 31px;
  box-sizing: border-box;
  background: #fff;
  border: 1px solid #bbb;
  border-radius: 4px;
}
.st.wide { width: 44px; }
.st.on { background: #d8e8fb; border-color: #4b90e0; }
.after-on { margin-left: 5px; }
.after-x { margin-left: 4px; }
.after-wide { margin-left: 1px; }
.logo { position: absolute; right: 0; top: 7px; }
.task-strip { flex: 1; background: linear-gradient(90deg, #d4e3f6, #e6eef9); }
</style>

<style>
html, body { margin: 0; padding: 0; background: #f0f0f0; }
</style>
